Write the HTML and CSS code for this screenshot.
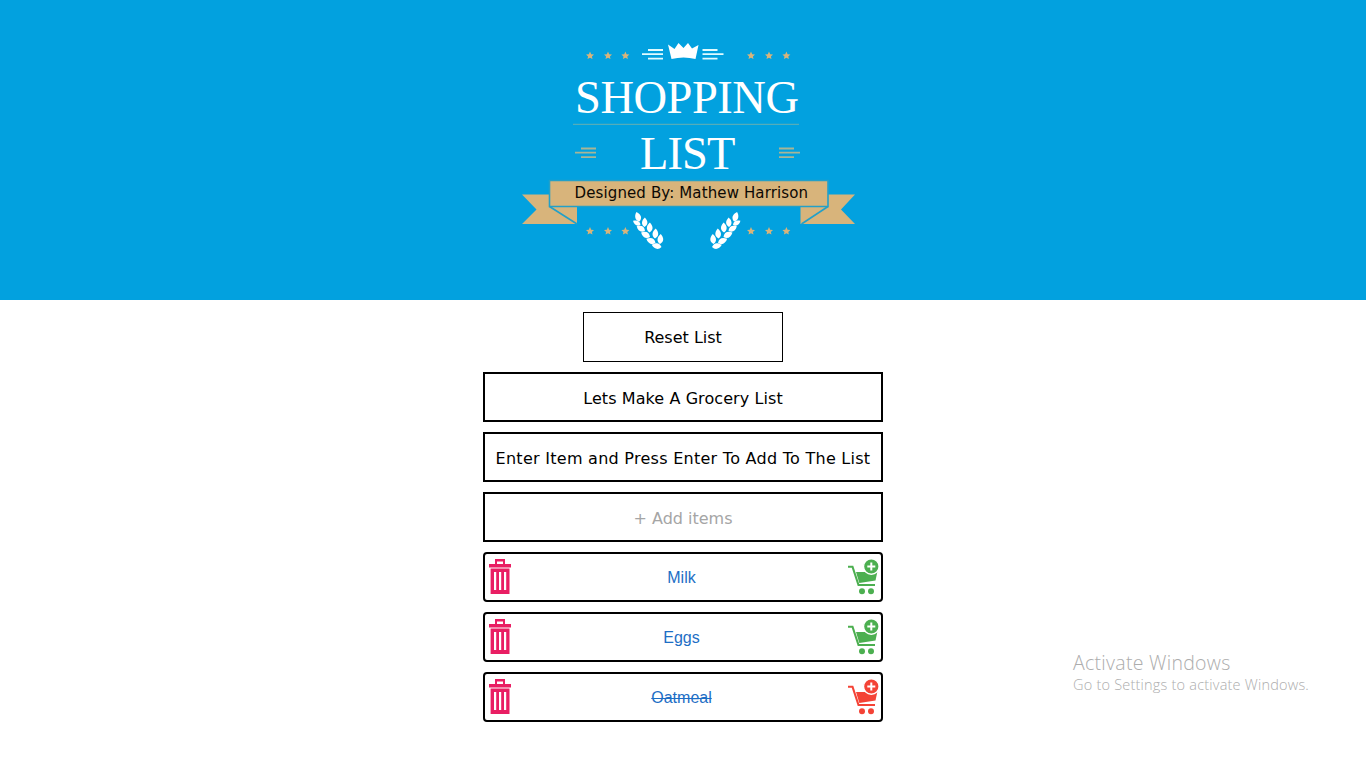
FILE: index.html
```html
<!DOCTYPE html>
<html lang="en">
<head>
<meta charset="utf-8">
<title>Shopping List</title>
<link rel="stylesheet" href="styles.css">
</head>
<body>
<svg class="defs" width="0" height="0">
  <defs>
    <path id="star" d="M0-4 1.2-1.3 4-1 1.9.9 2.5 3.6 0 2.2-2.5 3.6-1.9.9-4-1-1.2-1.3Z"/>
    <g id="stars"><use href="#star" x="0"/><use href="#star" x="18"/><use href="#star" x="35.4"/></g>
    <path id="lines" d="M6 0H21M0 4.2H21M6 8.6H21"/>
    <path id="leaf" d="M0 0C-4.200-2-4.200-6.500-1-10C3.200-6.500 3.500-3 0 0Z"/>
    <g id="wheat">
      <use href="#leaf" transform="translate(639.500 221.500) rotate(-12)"/>
      <use href="#leaf" transform="translate(640.500 225) rotate(-55) scale(.85)"/>
      <use href="#leaf" transform="translate(644.500 227) rotate(8) scale(.95)"/>
      <use href="#leaf" transform="translate(645 231) rotate(-55) scale(.95)"/>
      <use href="#leaf" transform="translate(649.500 232.500) rotate(8)"/>
      <use href="#leaf" transform="translate(650 237) rotate(-57)"/>
      <use href="#leaf" transform="translate(655 238.500) rotate(10)"/>
      <use href="#leaf" transform="translate(655.500 243) rotate(-60)"/>
      <use href="#leaf" transform="translate(660 244) rotate(10)"/>
      <use href="#leaf" transform="translate(661.500 247) rotate(-72)"/>
    </g>
    <symbol id="trash" viewBox="0 0 24 36">
      <path fill-rule="evenodd" d="M7 0H17V5H23V8.500H1V5H7ZM9 2.500V5H15V2.500ZM2.600 9.500H21.500V35H2.600ZM6 13V31H8.200V13ZM11 13V31H13.200V13ZM16 13V31H18.200V13Z"/>
    </symbol>
    <symbol id="cart" viewBox="0 0 32 37">
      <path d="M1 7.700H5.500L11.500 26H28" fill="none" stroke="currentColor" stroke-width="2.100"/>
      <path d="M9 13H30.300L28.500 21.500 12.300 24Z"/>
      <circle cx="24.300" cy="7.500" r="7.800" stroke="#fff" stroke-width="1.400"/>
      <path d="M24.300 3.500V11.500M20.300 7.500H28.300" stroke="#fff" stroke-width="2"/>
      <circle cx="15" cy="32.200" r="3"/><circle cx="24" cy="32.200" r="3"/>
    </symbol>
  </defs>
</svg>

<header class="banner">
  <svg class="emblem" viewBox="513 30 350 230" role="img" aria-label="Shopping List">
    <g class="tan">
      <use href="#stars" x="590" y="55.500"/><use href="#stars" x="751" y="55.500"/>
      <use href="#stars" x="590" y="231"/><use href="#stars" x="751" y="231"/>
      <path d="M522 194.500H577V224H522L536.500 209.500ZM855 194.500H800.500V224H855L841 209.500Z"/>
      <path class="fold" d="M828 206.500 801.500 224M549.500 206.500 577 224"/>
      <path class="fold" d="M549.500 180.500H828V206.500H549.500Z"/>
    </g>
    <g class="rules">
      <use href="#lines" x="575" y="148.500"/>
      <use href="#lines" transform="translate(800 148.500) scale(-1 1)"/>
    </g>
    <g class="rules light">
      <use href="#lines" x="642" y="50"/>
      <use href="#lines" transform="translate(723.500 50) scale(-1 1)"/>
    </g>
    <path class="divider" d="M573 124.300H799"/>
    <g class="white">
      <path d="M668 44.500 674.500 49 678.500 43 683.500 48 688 43 692 48.500 698.500 45 695.500 59Q683.500 56 671.500 59Z"/>
      <use href="#wheat"/>
      <use href="#wheat" transform="translate(1373.500 0) scale(-1 1)"/>
      <text class="title" x="575" y="113" textLength="224">SHOPPING</text>
      <text class="title" x="640" y="169" textLength="95.500">LIST</text>
    </g>
    <text class="credit" x="574.500" y="198" textLength="233.500">Designed By: Mathew Harrison</text>
  </svg>
</header>

<main class="panel">
  <button class="box reset">Reset List</button>
  <div class="box heading">Lets Make A Grocery List</div>
  <div class="box prompt">Enter Item and Press Enter To Add To The List</div>
  <input class="box entry" type="text" placeholder="+ Add items">
  <div class="box item"><svg class="trash"><use href="#trash"/></svg><span>Milk</span><svg class="cart"><use href="#cart"/></svg></div>
  <div class="box item"><svg class="trash"><use href="#trash"/></svg><span>Eggs</span><svg class="cart"><use href="#cart"/></svg></div>
  <div class="box item done"><svg class="trash"><use href="#trash"/></svg><span>Oatmeal</span><svg class="cart"><use href="#cart"/></svg></div>
</main>

<aside class="watermark">
  <div class="watermark-title">Activate Windows</div>
  <div class="watermark-text">Go to Settings to activate Windows.</div>
</aside>
</body>
</html>
```
FILE: styles.css
```css
* { box-sizing: border-box; }
body {
  margin: 0;
  height: 768px;
  overflow: hidden;
  background: #fff;
  font-family: Verdana, "DejaVu Sans", sans-serif;
  font-size: 16px;
}
.defs { position: absolute; }
.banner {
  height: 300px;
  padding: 30px 0 0 513px;
  background: #02a1df;
}
.emblem { display: block; width: 350px; height: 230px; }
.tan { fill: #d8b47b; }
.fold { stroke: #23a0c8; stroke-width: 1.6; }
.rules { stroke: #a8b596; stroke-width: 1.8; }
.light { stroke: #e0fbff; }
.divider { stroke: #55adb9; stroke-width: 1.3; }
.white { fill: #fff; }
.title { font: 46.500px "Liberation Serif", serif; }
.credit { font: 15px Verdana, "DejaVu Sans", sans-serif; fill: #0d0904; }

.panel {
  display: flex;
  flex-direction: column;
  align-items: center;
  gap: 10px;
  padding-top: 12px;
}
.box {
  display: flex;
  align-items: center;
  justify-content: center;
  width: 400px;
  height: 50px;
  padding: 0;
  border: 2px solid #000;
  background: #fff;
  color: #000;
  font: inherit;
  text-align: center;
  white-space: nowrap;
}
.reset { width: 200px; border-width: 1px; }
.heading { letter-spacing: .08px; padding-top: 2px; }
.prompt { letter-spacing: .27px; padding-top: 2px; }
.entry { padding-top: 2px; }
.entry::placeholder { color: #a5a5a5; opacity: 1; }
.item {
  justify-content: space-between;
  padding: 0 2px 0 3px;
  border-radius: 4px;
  color: #1d6ec5;
  font: 16px "Liberation Sans", Arial, sans-serif;
}
.item span { margin: 2px 0 0 4px; }
.trash { width: 24px; height: 36px; fill: #e91e63; }
.cart { width: 32px; height: 37px; fill: currentColor; color: #4caf50; }
.done span { text-decoration: line-through; }
.done .cart { color: #f44336; }

.watermark {
  position: absolute;
  left: 1073px;
  top: 649px;
  color: #adadad;
  font-family: "Open Sans", sans-serif;
  font-weight: 300;
  white-space: nowrap;
}
.watermark-title { font-size: 19.500px; line-height: 27px; letter-spacing: .28px; }
.watermark-text { font-size: 14.500px; line-height: 18px; letter-spacing: .21px; }
```
